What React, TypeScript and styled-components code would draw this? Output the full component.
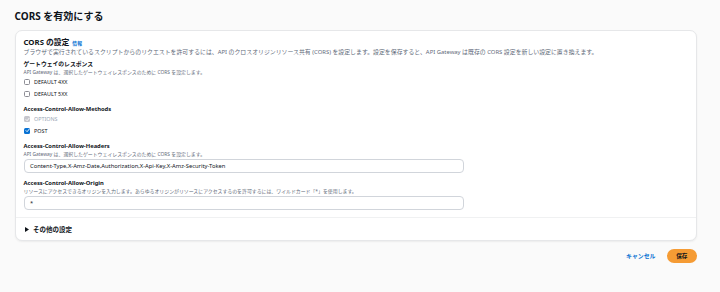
import styled, { createGlobalStyle } from "styled-components"

const GlobalStyle = createGlobalStyle`
  html, body {
    margin: 0;
    padding: 0;
    background: #fafafa;
  }
  body {
    font-family: "Noto Sans", "Noto Sans CJK JP", sans-serif;
    color: #0f141a;
  }
`

type CheckProps = {
  checked?: boolean
  disabled?: boolean
}

function Check({checked, disabled}: CheckProps) {
  return <Box checked={checked} disabled={disabled}>
    {checked && <svg width="5" height="5" viewBox="0 0 10 10">
      <polyline points="2,5.2 4.2,7.4 8.2,2.6" fill="none" stroke="#fff" strokeWidth="1.8" strokeLinecap="round" strokeLinejoin="round" />
    </svg>}
  </Box>
}

export default function App() {
  return <Page>
    <GlobalStyle />
    <Title>CORS を有効にする</Title>
    <Card>
      <Body>
        <Header>
          <h2>CORS の設定</h2>
          <InfoLink>情報</InfoLink>
        </Header>
        <Desc>ブラウザで実行されているスクリプトからのリクエストを許可するには、API のクロスオリジンリソース共有 (CORS) を設定します。設定を保存すると、API Gateway は既存の CORS 設定を新しい設定に置き換えます。</Desc>

        <Field>
          <Label>ゲートウェイのレスポンス</Label>
          <Hint>API Gateway は、選択したゲートウェイレスポンスのために CORS を設定します。</Hint>
          <CheckRow><Check /><span>DEFAULT 4XX</span></CheckRow>
          <CheckRow><Check /><span>DEFAULT 5XX</span></CheckRow>
        </Field>

        <Field>
          <Label>Access-Control-Allow-Methods</Label>
          <CheckRow disabled><Check checked disabled /><span>OPTIONS</span></CheckRow>
          <CheckRow><Check checked /><span>POST</span></CheckRow>
        </Field>

        <Field>
          <Label>Access-Control-Allow-Headers</Label>
          <Hint>API Gateway は、選択したゲートウェイレスポンスのために CORS を設定します。</Hint>
          <Input>Content-Type,X-Amz-Date,Authorization,X-Api-Key,X-Amz-Security-Token</Input>
        </Field>

        <Field>
          <Label>Access-Control-Allow-Origin</Label>
          <Hint>リソースにアクセスできるオリジンを入力します。あらゆるオリジンがリソースにアクセスするのを許可するには、ワイルドカード「*」を使用します。</Hint>
          <Input>*</Input>
        </Field>
      </Body>
      <Expander>
        <svg width="4" height="5" viewBox="0 0 4 5">
          <polygon points="0,0 4,2.5 0,5" fill="#0f141a" />
        </svg>
        <span>その他の設定</span>
      </Expander>
    </Card>
    <Actions>
      <LinkButton>キャンセル</LinkButton>
      <PrimaryButton>保存</PrimaryButton>
    </Actions>
  </Page>
}

const Page = styled.div`
  padding: 9px 23px 0 14.5px;
`

const Title = styled.h1`
  margin: 0 0 5.5px;
  font-size: 10px;
  line-height: 15px;
  font-weight: 700;
`

const Card = styled.div`
  background: #fff;
  border: 1px solid #e6e7e9;
  border-radius: 7px;
  box-shadow: 0 1px 2px rgba(0, 7, 22, 0.06);
`

const Body = styled.div`
  padding: 5.5px 8px 7.5px;
  border-bottom: 1px solid #f0f1f2;
`

const Header = styled.div`
  display: flex;
  align-items: baseline;
  gap: 3px;
  h2 {
    margin: 0;
    font-size: 7.8px;
    line-height: 12px;
    font-weight: 700;
  }
`

const InfoLink = styled.span`
  font-size: 4.8px;
  font-weight: 700;
  color: #0972d3;
`

const Desc = styled.p`
  margin: 0 0 4px;
  font-size: 5.9px;
  line-height: 8px;
  color: #5f6b7a;
  white-space: nowrap;
`

const Field = styled.div`
  display: flex;
  flex-direction: column;
  align-items: flex-start;
  & + & {
    margin-top: 6.5px;
  }
`

const Label = styled.div`
  font-size: 5.8px;
  line-height: 8.5px;
  font-weight: 700;
`

const Hint = styled.div`
  font-size: 4.9px;
  line-height: 7px;
  color: #5f6b7a;
  white-space: nowrap;
`

const CheckRow = styled.label<{disabled?: boolean}>`
  display: flex;
  align-items: center;
  gap: 4px;
  height: 10px;
  margin-top: 1.5px;
  font-size: 5.4px;
  color: ${({disabled}) => disabled ? '#9ba7b6' : '#0f141a'};
  ${Label} + & {
    margin-top: 0.5px;
  }
`

const Box = styled.span<CheckProps>`
  box-sizing: border-box;
  width: 6px;
  height: 6px;
  margin-left: 0.5px;
  border-radius: 1.5px;
  display: flex;
  align-items: center;
  justify-content: center;
  border: ${({checked}) => checked ? 'none' : '1px solid #8c8c94'};
  background: ${({checked, disabled}) => disabled ? '#c6c6cd' : checked ? '#0972d3' : '#fff'};
`

const Input = styled.div`
  box-sizing: border-box;
  width: 440px;
  height: 14px;
  margin-top: 1px;
  padding: 0 5.5px;
  display: flex;
  align-items: center;
  border: 1px solid #d1d5db;
  border-radius: 4px;
  background: #fff;
  font-size: 5.8px;
  color: #0f141a;
`

const Expander = styled.div`
  display: flex;
  align-items: center;
  gap: 4px;
  height: 11px;
  padding: 5.5px 9px 5.5px 9.5px;
  font-size: 6.5px;
  font-weight: 700;
`

const Actions = styled.div`
  display: flex;
  justify-content: flex-end;
  align-items: center;
  gap: 11px;
  margin-top: 8px;
`

const LinkButton = styled.span`
  font-size: 5.9px;
  font-weight: 700;
  color: #0972d3;
`

const PrimaryButton = styled.span`
  box-sizing: border-box;
  height: 13.5px;
  width: 30.5px;
  display: flex;
  align-items: center;
  justify-content: center;
  border-radius: 7px;
  background: #f59b34;
  font-size: 5.6px;
  font-weight: 700;
  color: #0f141a;
`
